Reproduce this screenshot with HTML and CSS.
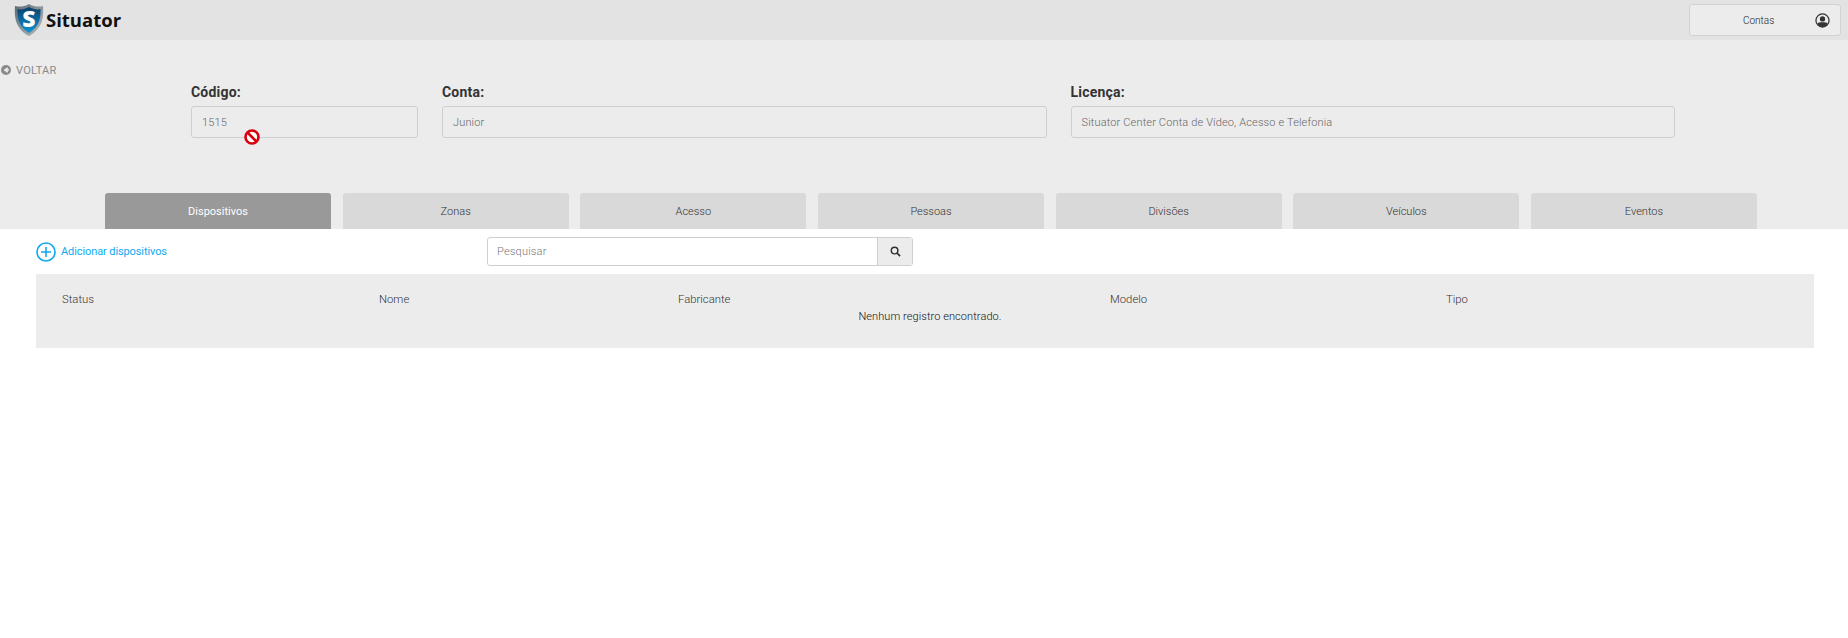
FILE: index.html
```html
<!DOCTYPE html>
<html lang="pt">
<head>
<meta charset="utf-8">
<title>Situator</title>
<link rel="stylesheet" href="styles.css">
</head>
<body>
<header class="topbar">
  <div class="brand">
    <svg class="shield" width="30" height="36" viewBox="0 0 30 36">
      <defs>
        <linearGradient id="sh" x1="0" y1="0" x2="0" y2="1"><stop offset="0" stop-color="#0c3f66"/><stop offset=".5" stop-color="#0b6aa3"/><stop offset="1" stop-color="#0f93d0"/></linearGradient>
        <linearGradient id="rim" x1="0" y1="0" x2="1" y2="1"><stop offset="0" stop-color="#5d6b74"/><stop offset="1" stop-color="#b5bcc1"/></linearGradient>
      </defs>
      <path d="M15 3 C20 6 25 6 29 5 C30 17 28 28 15 35 C2 28 0 17 1 5 C5 6 10 6 15 3Z" fill="url(#rim)"/>
      <path d="M15 6 C19 8 23 9 26.500 8 C27 17 25 26 15 32 C5 26 3 17 3.500 8 C7 9 11 8 15 6Z" fill="url(#sh)"/>
      <text x="15" y="26" text-anchor="middle" class="shield-s">S</text>
    </svg>
    <span class="brand-name">Situator</span>
  </div>
  <button class="account">
    <span class="account-label">Contas</span>
    <svg class="account-icon" width="15" height="15" viewBox="0 0 16 16">
      <circle cx="8" cy="8" r="7" fill="none" stroke="#333" stroke-width="1.300"/>
      <circle cx="8" cy="6.300" r="2.800" fill="#333"/>
      <path d="M2.500 11 C4 9.500 12 9.500 13.500 11 C12.500 14 10 15 8 15 C6 15 3.500 14 2.500 11Z" fill="#333"/>
    </svg>
  </button>
</header>

<section class="panel">
  <a class="back">
    <svg width="10" height="10" viewBox="0 0 10 10"><circle cx="5" cy="5" r="5" fill="#8a8a8a"/><path d="M6.800 2.800 L3.800 5 L6.800 7.200M3.800 5H8" fill="none" stroke="#ececec" stroke-width="1.500"/></svg>
    VOLTAR
  </a>
  <div class="fields">
    <div class="field field-code"><label>Código:</label><div class="input">1515</div></div>
    <div class="field field-wide"><label>Conta:</label><div class="input">Junior</div></div>
    <div class="field field-wide"><label>Licença:</label><div class="input">Situator Center Conta de Vídeo, Acesso e Telefonia</div></div>
  </div>
  <nav class="tabs">
    <a class="tab active">Dispositivos</a>
    <a class="tab">Zonas</a>
    <a class="tab">Acesso</a>
    <a class="tab">Pessoas</a>
    <a class="tab">Divisões</a>
    <a class="tab">Veículos</a>
    <a class="tab">Eventos</a>
  </nav>
</section>

<main class="content">
  <div class="toolbar">
    <a class="add">
      <svg width="20" height="20" viewBox="0 0 20 20"><circle cx="10" cy="10" r="9" fill="none" stroke="#0fa9f0" stroke-width="1.600"/><path d="M10 5v10M5 10h10" stroke="#0fa9f0" stroke-width="1.600"/></svg>
      Adicionar dispositivos
    </a>
    <div class="search">
      <div class="search-input">Pesquisar</div>
      <div class="search-btn">
        <svg width="11" height="11" viewBox="0 0 12 12"><circle cx="5" cy="5" r="3.600" fill="none" stroke="#333" stroke-width="1.600"/><path d="M7.800 7.800 L11 11" stroke="#333" stroke-width="1.800"/></svg>
      </div>
    </div>
  </div>
  <div class="table">
    <div class="table-head">
      <span>Status</span><span>Nome</span><span>Fabricante</span><span>Modelo</span><span>Tipo</span>
    </div>
    <div class="table-empty">Nenhum registro encontrado.</div>
  </div>
</main>

<svg class="cursor" width="18" height="18" viewBox="0 0 18 18"><circle cx="9" cy="9" r="6.500" fill="#fff" stroke="#d9000d" stroke-width="2.600"/><path d="M4.500 4.500 L13.500 13.500" stroke="#d9000d" stroke-width="2.600"/></svg>
</body>
</html>
```
FILE: styles.css
```css
* { box-sizing: border-box; }
html, body { margin: 0; padding: 0; }
body {
  position: relative;
  height: 638px;
  overflow: hidden;
  background: #fff;
  font-family: Roboto, "Liberation Sans", sans-serif;
  font-size: 11px;
  font-weight: 300;
  color: #333;
}
.topbar {
  height: 40px;
  background: #e3e3e3;
  display: flex;
  justify-content: space-between;
  align-items: flex-start;
  padding-right: 7px;
}
.brand { display: flex; align-items: center; padding-left: 14px; height: 38px; }
.shield { display: block; margin-top: -1px; }
.shield-s { font-family: "Open Sans", sans-serif; font-weight: 800; font-size: 23px; fill: #fff; }
.brand-name {
  font-family: "Open Sans", sans-serif;
  font-weight: 700;
  font-size: 18.500px;
  color: #111;
  margin-left: 2px;
}
.account {
  margin-top: 4px;
  width: 152px;
  height: 32px;
  background: #ececec;
  border: 1px solid #d2d2d2;
  border-radius: 3px;
  display: flex;
  align-items: center;
  padding: 0 10px 0 53px;
  font: inherit;
  font-size: 10px;
  color: #222;
}
.account-label { flex: 1; text-align: left; }
.panel { height: 189px; background: #ececec; display: flex; flex-direction: column; }
.back {
  display: flex;
  align-items: center;
  gap: 5px;
  margin-top: 23px;
  padding-left: 1px;
  height: 14px;
  letter-spacing: .25px;
  font-weight: 400;
  color: #8a8a8a;
}
.fields { display: flex; gap: 24px; padding-left: 191px; margin-top: 5px; }
.field label {
  display: block;
  height: 24px;
  line-height: 20px;
  font-size: 14px;
  font-weight: 700;
  letter-spacing: .2px;
  color: #333;
}
.field-code { width: 227px; }
.field-wide { width: 604.500px; }
.input {
  height: 32px;
  line-height: 31px;
  padding: 0 10px;
  border: 1px solid #cfcfcf;
  border-radius: 3px;
  letter-spacing: .15px;
  color: #666;
}
.tabs { display: flex; gap: 11.670px; padding-left: 105px; margin-top: auto; }
.tab {
  width: 226px;
  height: 36px;
  line-height: 37px;
  text-align: center;
  background: #d9d9d9;
  border-radius: 3px 3px 0 0;
}
.tab.active { background: #999; color: #fff; font-weight: 400; }
.content { padding: 8px 34px 0 36px; }
.toolbar { display: flex; align-items: center; height: 29px; }
.add {
  width: 451px;
  display: flex;
  align-items: center;
  gap: 5px;
  font-weight: 400;
  letter-spacing: -.1px;
  color: #0fa9f0;
}
.search { display: flex; width: 426px; height: 29px; border: 1px solid #cfcfcf; border-radius: 3px; }
.search-input { flex: 1; padding-left: 9px; line-height: 28px; color: #777; letter-spacing: .2px; }
.search-btn {
  width: 35px;
  background: #ececec;
  border-left: 1px solid #cfcfcf;
  display: flex;
  align-items: center;
  justify-content: center;
}
.table { margin-top: 8px; height: 74px; background: #ececec; padding-top: 18px; }
.table-head {
  display: grid;
  grid-template-columns: 317px 299px 432px 336px 1fr;
  padding-left: 26px;
  line-height: 16px;
  font-size: 11.300px;
}
.table-head span { display: block; }
.table-empty { text-align: center; line-height: 16px; margin-top: 1px; letter-spacing: .08px; color: #111; padding-left: 10px; }
.cursor { position: absolute; left: 243px; top: 128px; }
```
